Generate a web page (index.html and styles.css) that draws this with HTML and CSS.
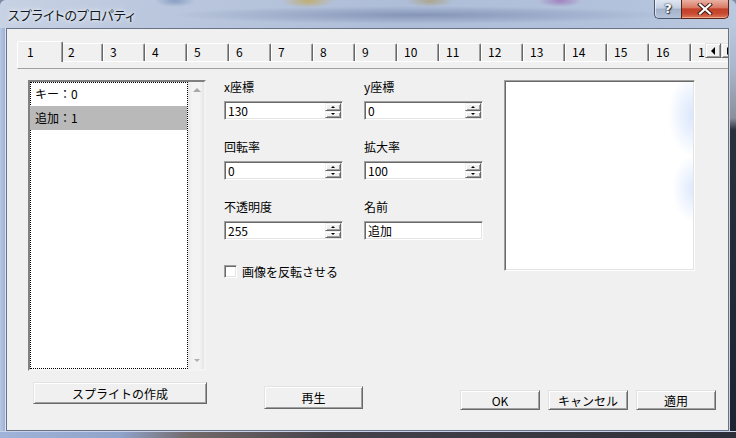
FILE: index.html
```html
<!DOCTYPE html>
<html lang="ja">
<head>
<meta charset="utf-8">
<title>スプライトのプロパティ</title>
<link rel="stylesheet" href="styles.css">
</head>
<body>
<div class="window">
  <div class="titlebar">
    <span class="title">スプライトのプロパティ</span>
    <div class="caption-buttons">
      <div class="cap help">?</div>
      <div class="cap close">
        <svg width="16" height="12" viewBox="0 0 16 12"><path d="M3 1.5 L13 10.5 M13 1.5 L3 10.5" stroke="#3a1a14" stroke-width="4" stroke-linecap="square"/><path d="M3 1.5 L13 10.5 M13 1.5 L3 10.5" stroke="#ffffff" stroke-width="2.2" stroke-linecap="square"/></svg>
      </div>
    </div>
  </div>
  <div class="middle">
    <div class="frame-left"></div>
    <div class="client">
      <div class="tabbar">
        <div class="tabs">
          <div class="tab selected">1</div>
          <div class="tab">2</div>
          <div class="tab">3</div>
          <div class="tab">4</div>
          <div class="tab">5</div>
          <div class="tab">6</div>
          <div class="tab">7</div>
          <div class="tab">8</div>
          <div class="tab">9</div>
          <div class="tab">10</div>
          <div class="tab">11</div>
          <div class="tab">12</div>
          <div class="tab">13</div>
          <div class="tab">14</div>
          <div class="tab">15</div>
          <div class="tab">16</div>
          <div class="tab">17</div>
        </div>
        <div class="scroll-btn"><span class="tri-left"></span></div>
        <div class="scroll-btn"><span class="tri-right"></span></div>
      </div>
      <div class="tab-panel"></div>
      <div class="body">
        <div class="listbox">
          <div class="list-items">
            <div class="item">キー：0</div>
            <div class="item sel">追加：1</div>
          </div>
          <div class="vscroll">
            <span class="arrow-up"></span>
            <span class="arrow-down"></span>
          </div>
        </div>
        <div class="fields">
          <div class="field">
            <div class="label">x座標</div>
            <div class="sunken spin"><span class="val">130</span><div class="spin-btns"><div class="sb"><span class="tri-up"></span></div><div class="sb"><span class="tri-down"></span></div></div></div>
          </div>
          <div class="field">
            <div class="label">y座標</div>
            <div class="sunken spin"><span class="val">0</span><div class="spin-btns"><div class="sb"><span class="tri-up"></span></div><div class="sb"><span class="tri-down"></span></div></div></div>
          </div>
          <div class="field">
            <div class="label">回転率</div>
            <div class="sunken spin"><span class="val">0</span><div class="spin-btns"><div class="sb"><span class="tri-up"></span></div><div class="sb"><span class="tri-down"></span></div></div></div>
          </div>
          <div class="field">
            <div class="label">拡大率</div>
            <div class="sunken spin"><span class="val">100</span><div class="spin-btns"><div class="sb"><span class="tri-up"></span></div><div class="sb"><span class="tri-down"></span></div></div></div>
          </div>
          <div class="field">
            <div class="label">不透明度</div>
            <div class="sunken spin"><span class="val">255</span><div class="spin-btns"><div class="sb"><span class="tri-up"></span></div><div class="sb"><span class="tri-down"></span></div></div></div>
          </div>
          <div class="field">
            <div class="label">名前</div>
            <div class="sunken spin"><span class="val">追加</span></div>
          </div>
          <div class="check"><span class="sunken box"></span><span class="check-label">画像を反転させる</span></div>
        </div>
        <div class="sunken preview"></div>
      </div>
      <div class="footer">
        <div class="btn create">スプライトの作成</div>
        <div class="btn play">再生</div>
        <div class="btn ok">OK</div>
        <div class="btn cancel">キャンセル</div>
        <div class="btn apply">適用</div>
      </div>
    </div>
    <div class="frame-right"></div>
  </div>
  <div class="frame-bottom"></div>
</div>
</body>
</html>
```
FILE: styles.css
```css
html, body {
  margin: 0;
  padding: 0;
}
body {
  width: 736px;
  height: 438px;
  overflow: hidden;
  background: #7d8aa3;
  font-family: "Noto Sans CJK JP", "Noto Sans", sans-serif;
  font-size: 12px;
  color: #000;
}
.window {
  width: 736px;
  height: 438px;
  display: flex;
  flex-direction: column;
  border-radius: 6px 6px 0 0;
  overflow: hidden;
  background: #a9bad8;
}
.titlebar {
  height: 28px;
  flex: none;
  display: flex;
  align-items: flex-start;
  background:
    radial-gradient(ellipse 26px 7px at 308px 1px, rgba(196, 168, 80, 0.75), rgba(196, 168, 80, 0)),
    radial-gradient(ellipse 24px 6px at 430px 1px, rgba(170, 150, 90, 0.6), rgba(170, 150, 90, 0)),
    radial-gradient(ellipse 22px 6px at 560px 1px, rgba(150, 90, 170, 0.6), rgba(150, 90, 170, 0)),
    radial-gradient(ellipse 20px 6px at 175px 1px, rgba(90, 120, 170, 0.5), rgba(90, 120, 170, 0)),
    radial-gradient(ellipse 250px 9px at 420px 15px, rgba(100, 116, 156, 0.55), rgba(100, 116, 156, 0)),
    linear-gradient(to right, #c7d2e4 0, #bcc8de 130px, #aebdd8 400px, #b3c2dc 620px, #bac8df 100%);
}
.title {
  margin: 5px 0 0 8px;
  font-size: 13px;
  line-height: 20px;
  font-feature-settings: "palt";
  color: #101820;
  text-shadow: 0 0 6px rgba(255, 255, 255, 0.9), 0 0 3px rgba(255, 255, 255, 0.8);
}
.caption-buttons {
  margin-left: auto;
  margin-right: 7px;
  display: flex;
}
.cap {
  height: 19px;
  box-sizing: border-box;
  border: 1px solid #4a566c;
  border-top: none;
  display: flex;
  align-items: center;
  justify-content: center;
}
.help {
  width: 27px;
  border-radius: 0 0 0 5px;
  border-right: none;
  background: linear-gradient(to bottom, #dfe6f1 0, #c3cfe0 45%, #a3b2ca 50%, #b5c3d9 100%);
  box-shadow: inset 1px 0 rgba(255, 255, 255, 0.6);
  color: #fff;
  font-family: "DejaVu Sans", sans-serif;
  font-weight: bold;
  font-size: 13px;
  line-height: 16px;
  text-shadow: 0 0 2px #2c3648, 0 0 1px #2c3648, 1px 1px 1px #2c3648;
}
.close {
  width: 48px;
  border-radius: 0 0 5px 0;
  border-color: #5a2418;
  background: linear-gradient(to bottom, #eab2a5 0, #d97a64 42%, #c3402a 50%, #c84a30 75%, #dc7a5c 100%);
  box-shadow: inset 0 -1px rgba(255, 200, 170, 0.6);
}
.middle {
  height: 403px;
  flex: none;
  display: flex;
}
.frame-left {
  width: 6px;
  flex: none;
  background: linear-gradient(to right, #b8c7e3, #98acd4);
  box-shadow: inset -1px 0 #dde5f2;
}
.client {
  width: 723px;
  flex: none;
  box-sizing: border-box;
  border: 1px solid #687286;
  background: #f0f0f0;
  overflow: hidden;
  display: flex;
  flex-direction: column;
}
.frame-right {
  width: 7px;
  flex: none;
  background: linear-gradient(to bottom, #bac6db 0, #aab6cb 40px, #8a8f9a 90px, #2a2f3c 102px, #1e2331 100%);
  box-shadow: inset 1px 0 #c9d1dd;
}
.frame-bottom {
  height: 7px;
  flex: none;
  background: linear-gradient(to right, #9fb2d8 0, #90a3ca 120px, #72696a 190px, #45424a 330px, #2c2f39 100%);
  box-shadow: inset 0 1px #c8d2e4;
}

/* tabs */
.tabbar {
  margin-top: 12px;
  height: 21px;
  margin-bottom: -1px;
  padding-left: 10px;
  display: flex;
  position: relative;
  z-index: 1;
  flex: none;
}
.tabs {
  width: 688px;
  flex: none;
  padding-left: 2px;
  box-sizing: border-box;
  overflow: hidden;
  display: flex;
  align-items: flex-start;
}
.tab {
  width: 42px;
  flex: none;
  height: 18px;
  margin-top: 2px;
  box-sizing: border-box;
  border-left: 1px solid #fff;
  border-top: 1px solid #fff;
  border-right: 1px solid #696969;
  box-shadow: inset -1px 0 #a0a0a0;
  border-radius: 2px 2px 0 0;
  padding-left: 6px;
  line-height: 16px;
  background: #f0f0f0;
}
.tab.selected {
  width: 46px;
  height: 21px;
  margin: 0 -2px;
  padding-left: 9px;
  line-height: 19px;
  position: relative;
  z-index: 2;
  box-shadow: inset -1px 0 #a0a0a0;
  border-bottom: none;
}
.scroll-btn {
  width: 16px;
  height: 15px;
  flex: none;
  margin-top: 2px;
  box-sizing: border-box;
  background: #f0f0f0;
  border: 1px solid;
  border-color: #e3e3e3 #696969 #696969 #e3e3e3;
  box-shadow: inset 1px 1px #fff, inset -1px -1px #a0a0a0;
  display: flex;
  align-items: center;
  justify-content: center;
}
.tri-left {
  width: 0;
  height: 0;
  border-top: 4px solid transparent;
  border-bottom: 4px solid transparent;
  border-right: 4px solid #000;
}
.tri-right {
  width: 0;
  height: 0;
  border-top: 4px solid transparent;
  border-bottom: 4px solid transparent;
  border-left: 4px solid #000;
}
.tab-panel {
  flex: none;
  margin-left: 10px;
  height: 6px;
  border-top: 1px solid #fff;
  border-left: 1px solid #fff;
  border-bottom: 1px solid #a0a0a0;
}

/* body */
.sunken {
  box-sizing: border-box;
  border: 1px solid;
  border-color: #a0a0a0 #fff #fff #a0a0a0;
  box-shadow: inset 1px 1px #696969, inset -1px -1px #e3e3e3;
  background: #fff;
}
.body {
  flex: none;
  margin-top: 11px;
  height: 291px;
  padding-left: 21px;
  display: flex;
  align-items: flex-start;
}
.listbox {
  width: 178px;
  height: 291px;
  flex: none;
  box-sizing: border-box;
  border-left: 2px solid #808080;
  border-top: 2px solid #808080;
  border-right: 2px solid #f4f4f4;
  border-bottom: 2px solid #f4f4f4;
  box-shadow: inset 1px 1px #696969;
  display: flex;
  background: #fff;
}
.list-items {
  width: 158px;
  flex: none;
  box-sizing: border-box;
  border: 1px dotted #000;
  background: #fff;
}
.item {
  height: 23px;
  line-height: 22px;
  padding-left: 4px;
}
.item.sel {
  height: 24px;
  line-height: 24px;
  margin-left: -1px;
  padding-left: 5px;
  background: #b9b9b9;
}
.vscroll {
  width: 16px;
  flex: none;
  background: linear-gradient(to right, #e6e6e6 0, #f3f3f3 25%, #f3f3f3 75%, #e4e4e4 100%);
  display: flex;
  flex-direction: column;
  align-items: center;
  justify-content: space-between;
  padding: 6px 0 7px 2px;
  box-sizing: border-box;
}
.arrow-up {
  width: 0;
  height: 0;
  border-left: 4px solid transparent;
  border-right: 4px solid transparent;
  border-bottom: 4px solid #a8a8a8;
}
.arrow-down {
  width: 0;
  height: 0;
  border-left: 3px solid transparent;
  border-right: 3px solid transparent;
  border-top: 3px solid #b0b0b0;
}
.fields {
  margin-left: 18px;
  width: 259px;
  flex: none;
  display: grid;
  grid-template-columns: 119px 119px;
  column-gap: 21px;
  row-gap: 20px;
}
.label {
  height: 14px;
  line-height: 14px;
  margin-bottom: 7px;
}
.spin {
  width: 119px;
  height: 19px;
  display: flex;
  border-width: 1px;
}
.val {
  flex: 1;
  padding-left: 3px;
  line-height: 17px;
}
.spin-btns {
  width: 16px;
  flex: none;
  margin: 1px 1px 1px 0;
  display: flex;
  flex-direction: column;
}
.sb {
  flex: 1;
  box-sizing: border-box;
  background: #f0f0f0;
  border: 1px solid;
  border-color: #f0f0f0 #696969 #696969 #f0f0f0;
  box-shadow: inset 1px 1px #fff, inset -1px -1px #a0a0a0;
  display: flex;
  align-items: center;
  justify-content: center;
}
.tri-up {
  width: 0;
  height: 0;
  border-left: 2px solid transparent;
  border-right: 2px solid transparent;
  border-bottom: 2px solid #000;
}
.tri-down {
  width: 0;
  height: 0;
  border-left: 2px solid transparent;
  border-right: 2px solid transparent;
  border-top: 2px solid #000;
}
.check {
  grid-column: 1 / span 2;
  margin-top: 5px;
  display: flex;
  align-items: center;
  height: 13px;
}
.box {
  width: 13px;
  height: 13px;
  flex: none;
}
.check-label {
  margin-left: 5px;
  line-height: 14px;
}
.preview {
  margin-left: 21px;
  width: 191px;
  height: 191px;
  flex: none;
  border-width: 1px;
  background:
    radial-gradient(ellipse 26px 42px at 100% 18%, rgba(214, 228, 252, 0.95), rgba(214, 228, 252, 0)),
    radial-gradient(ellipse 22px 34px at 100% 57%, rgba(218, 230, 252, 0.9), rgba(218, 230, 252, 0)),
    #fff;
}

/* footer */
.footer {
  flex: none;
  margin-top: 11px;
  padding-left: 26px;
  display: flex;
  align-items: flex-start;
}
.btn {
  box-sizing: border-box;
  background: #f0f0f0;
  border: 1px solid;
  border-color: #e3e3e3 #696969 #696969 #e3e3e3;
  box-shadow: inset 1px 1px #fff, inset -1px -1px #a0a0a0;
  display: flex;
  align-items: center;
  justify-content: center;
  flex: none;
}
.create {
  width: 174px;
  height: 22px;
}
.play {
  width: 99px;
  height: 23px;
  margin-left: 57px;
  margin-top: 4px;
}
.ok {
  width: 80px;
  height: 20px;
  margin-left: 97px;
  margin-top: 8px;
}
.cancel {
  width: 80px;
  height: 20px;
  margin-left: 8px;
  margin-top: 8px;
}
.apply {
  width: 80px;
  height: 20px;
  margin-left: 8px;
  margin-top: 8px;
}
```
